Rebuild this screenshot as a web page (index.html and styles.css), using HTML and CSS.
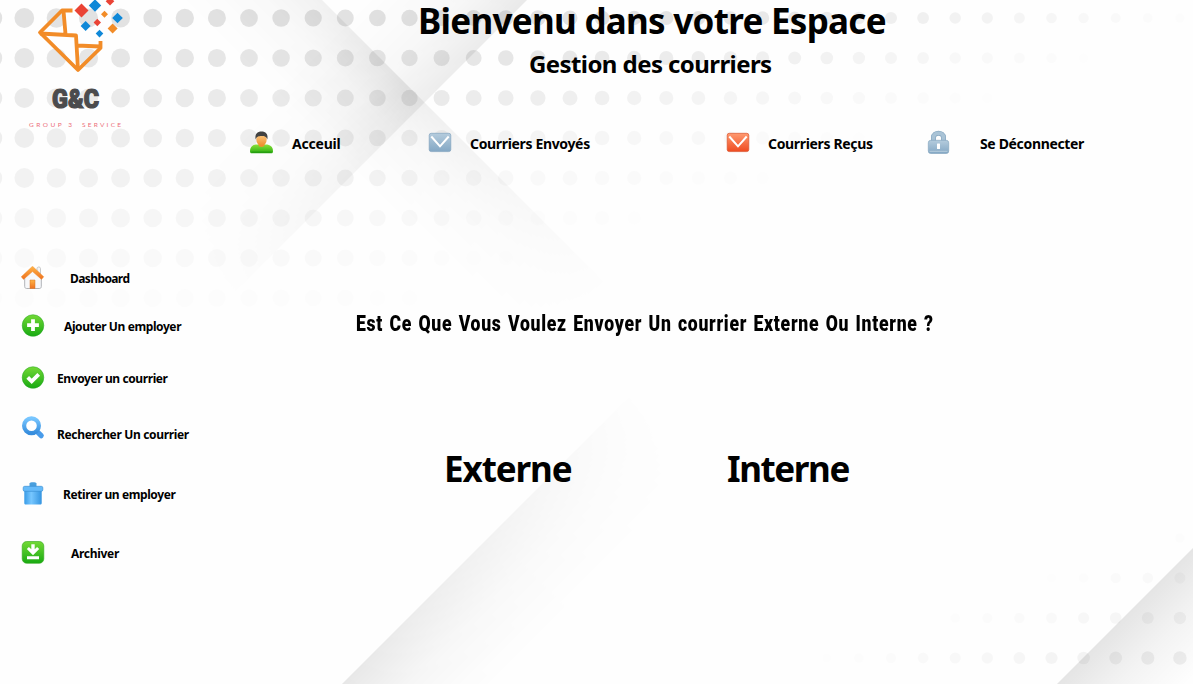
FILE: index.html
```html
<!DOCTYPE html>
<html lang="fr">
<head>
<meta charset="utf-8">
<title>Gestion des courriers</title>
<link rel="stylesheet" href="styles.css">
</head>
<body>
<svg class="backdrop" width="1193" height="684" viewBox="0 0 1193 684" aria-hidden="true">
  <defs>
    <linearGradient id="ga" gradientUnits="userSpaceOnUse" x1="424" y1="102" x2="354" y2="172"><stop offset="0" stop-opacity=".085"/><stop offset=".4" stop-opacity=".035"/><stop offset="1" stop-opacity="0"/></linearGradient>
    <linearGradient id="ma" gradientUnits="userSpaceOnUse" x1="320" y1="0" x2="610" y2="290"><stop offset="0" stop-color="#999"/><stop offset=".3" stop-color="#fff"/><stop offset=".37" stop-color="#aaa"/><stop offset=".65" stop-color="#555"/><stop offset="1" stop-color="#000"/></linearGradient>
    <mask id="ka" maskUnits="userSpaceOnUse" x="0" y="0" width="1193" height="684"><rect width="1193" height="684" fill="url(#ma)"/></mask>
    <linearGradient id="gb" gradientUnits="userSpaceOnUse" x1="424" y1="102" x2="344" y2="22"><stop offset="0" stop-opacity=".08"/><stop offset=".4" stop-opacity=".03"/><stop offset="1" stop-opacity="0"/></linearGradient>
    <linearGradient id="mb" gradientUnits="userSpaceOnUse" x1="527" y1="0" x2="230" y2="297"><stop offset="0" stop-color="#fff"/><stop offset=".35" stop-color="#ccc"/><stop offset="1" stop-color="#000"/></linearGradient>
    <mask id="kb" maskUnits="userSpaceOnUse" x="0" y="0" width="1193" height="684"><rect width="1193" height="684" fill="url(#mb)"/></mask>
    <linearGradient id="gc" gradientUnits="userSpaceOnUse" x1="342" y1="684" x2="417" y2="759"><stop offset="0" stop-opacity=".09"/><stop offset=".45" stop-opacity=".035"/><stop offset="1" stop-opacity="0"/></linearGradient>
    <linearGradient id="mc" gradientUnits="userSpaceOnUse" x1="342" y1="684" x2="635" y2="391"><stop offset="0" stop-color="#fff"/><stop offset=".35" stop-color="#aaa"/><stop offset="1" stop-color="#000"/></linearGradient>
    <mask id="kc" maskUnits="userSpaceOnUse" x="0" y="0" width="1193" height="684"><rect width="1193" height="684" fill="url(#mc)"/></mask>
    <linearGradient id="gd" gradientUnits="userSpaceOnUse" x1="1125" y1="616" x2="1190" y2="681"><stop offset="0" stop-opacity=".1"/><stop offset=".45" stop-opacity=".045"/><stop offset="1" stop-opacity="0"/></linearGradient>
  </defs>
  <path d="M0 0H322L722 400H0z" fill="url(#ga)" mask="url(#ka)"/>
  <path d="M0 0H527L127 400H0z" fill="url(#gb)" mask="url(#kb)"/>
  <path d="M342 684L742 284V684z" fill="url(#gc)" mask="url(#kc)"/>
  <path d="M1057 684L1193 548V684z" fill="url(#gd)"/>
  <g id="dots"></g>
</svg>

<div class="page">
  <header class="header">
    <svg class="logo" width="112" height="134" viewBox="18 0 112 134" role="img" aria-label="G&amp;C Group 3 Service">
      <g fill="none" stroke="#f28c28" stroke-width="3.800" stroke-linejoin="round">
        <path d="M72.500 10.500H62L40 32.500L78 70L100.500 48V41"/>
        <path d="M63.500 11L65.500 34M40 33.500L76 35.500L78 70M77 45.500L100 46.500"/>
      </g>
      <path d="M81.500 3.500l7 7-7 7-7-7z" fill="#ea4335"/>
      <path d="M95-.7l6.200 6.200-6.200 6.200-6.200-6.200z" fill="#0f88d8"/>
      <path d="M110-3l4.300 4.300-4.300 4.300-4.300-4.300z" fill="#ea4335"/>
      <path d="M117.500 12.700l5.300 5.300-5.300 5.300-5.300-5.300z" fill="#0f88d8"/>
      <path d="M104.500 10.800l3.500 3.500-3.500 3.500-3.500-3.500z" fill="#f28c28"/>
      <path d="M85.600 21l5 5-5 5-5-5z" fill="#0f88d8"/>
      <path d="M97.300 18.800l3.700 3.700-3.700 3.700-3.700-3.700z" fill="#ea4335"/>
      <path d="M112.600 23.500l5 5-5 5-5-5z" fill="#f28c28"/>
      <path d="M99.500 29.800l3.800 3.800-3.800 3.800-3.800-3.800z" fill="#0f88d8"/>
      <text class="logo-name" x="52" y="107.500" textLength="47" lengthAdjust="spacingAndGlyphs">G&amp;C</text>
      <text class="logo-tag" x="29" y="127" textLength="43">GROUP 3</text>
      <text class="logo-tag" x="82" y="127" textLength="39">SERVICE</text>
    </svg>
    <div class="titles">
      <h1 class="title">Bienvenu dans votre Espace</h1>
      <h2 class="subtitle">Gestion des courriers</h2>
    </div>
  </header>

  <nav class="nav">
    <a class="nav-item nav-home">
      <svg width="24" height="24" viewBox="0 0 24 24"><defs><linearGradient id="g1" x2="0" y2="1"><stop stop-color="#8be03a"/><stop offset="1" stop-color="#2bad12"/></linearGradient><linearGradient id="g2" x2="0" y2="1"><stop stop-color="#ffd08a"/><stop offset="1" stop-color="#ee8d2c"/></linearGradient></defs><path d="M1 21.500c0-5 3-7 7-7h9c4 0 7 2 7 7 0 1-.7 1.800-1.500 1.800H2.500c-.8 0-1.500-.8-1.500-1.800z" fill="url(#g1)"/><path d="M2.500 22.200h20" stroke="#239a10" stroke-width="1.200"/><path d="M9.500 12h6v3c0 2.500-6 2.500-6 0z" fill="#ec9230"/><ellipse cx="12.500" cy="9.500" rx="5.200" ry="6.200" fill="url(#g2)"/><path d="M6.700 9.500C5.500 4 8.500 1.500 12.500 1.500S19.500 4 18.300 9.500C17.500 6.500 15.500 6 12.500 6S7.500 6.500 6.700 9.500z" fill="#424242"/></svg>
      <span>Acceuil</span>
    </a>
    <a class="nav-item nav-sent">
      <svg width="24" height="24" viewBox="0 0 24 24"><defs><linearGradient id="g3" x2="0" y2="1"><stop stop-color="#b5ccdd"/><stop offset="1" stop-color="#83a7c4"/></linearGradient></defs><rect x="1.200" y="3.300" width="21.600" height="18.300" rx="2" fill="url(#g3)" stroke="#82a4be" stroke-width=".7"/><path d="M3.300 6.500l8.700 9.800 8.700-9.800" fill="none" stroke="#fff" stroke-width="2"/></svg>
      <span>Courriers Envoyés</span>
    </a>
    <a class="nav-item nav-received">
      <svg width="24" height="24" viewBox="0 0 24 24"><defs><linearGradient id="g4" x2="0" y2="1"><stop stop-color="#ff9a70"/><stop offset="1" stop-color="#ef4b20"/></linearGradient></defs><rect x="1.200" y="3.300" width="21.600" height="18.300" rx="2" fill="url(#g4)" stroke="#d9532d" stroke-width=".7"/><path d="M3.300 6.500l8.700 9.800 8.700-9.800" fill="none" stroke="#fff" stroke-width="2"/></svg>
      <span>Courriers Reçus</span>
    </a>
    <a class="nav-item nav-logout">
      <svg width="24" height="24" viewBox="0 0 24 24"><path d="M7.500 11V7.500C7.500 1.800 17.500 1.800 17.500 7.500V11" fill="none" stroke="#88a9c2" stroke-width="5"/><path d="M7.500 11V7.500C7.500 1.800 17.500 1.800 17.500 7.500V11" fill="none" stroke="#a9c3d6" stroke-width="3.600"/><rect x="2.300" y="10.300" width="20.400" height="13.200" rx="2.500" fill="url(#g3)" stroke="#86a7c0" stroke-width=".7"/><path d="M3.500 21.300h18" stroke="#c3d6e3" stroke-width=".8"/><rect x="11" y="13.500" width="3" height="5.500" rx=".5" fill="#fff"/></svg>
      <span>Se Déconnecter</span>
    </a>
  </nav>

  <div class="content">
    <aside class="sidebar">
      <a class="side-item item-dashboard">
        <svg width="24" height="24" viewBox="0 0 24 24"><defs><linearGradient id="g5" x2="0" y2="1"><stop stop-color="#ffb445"/><stop offset="1" stop-color="#ef7120"/></linearGradient></defs><path d="M16 2.500c0-2 3.500-2 3.500 0V8L16 5z" fill="#f4f4f4" stroke="#bbb" stroke-width=".8"/><path d="M3.700 11L12 3.500l8.300 7.500v9.500c0 1.300-.7 2-2 2H5.700c-1.300 0-2-.7-2-2z" fill="#f7f8fa" stroke="#a9abb0" stroke-width=".9"/><path d="M11.500 .2L.2 10.800l2.300 2.600 9-7.800 9 7.800 2.300-2.600z" fill="url(#g5)" stroke="#ed8a2e" stroke-width=".4"/><path d="M9 14h5v8.500H9z" fill="url(#g5)" stroke="#d77729" stroke-width=".5"/></svg>
        <span>Dashboard</span>
      </a>
      <a class="side-item item-add">
        <svg width="24" height="24" viewBox="0 0 24 24"><defs><linearGradient id="g6" x2="0" y2="1"><stop stop-color="#73d936"/><stop offset="1" stop-color="#18aa12"/></linearGradient></defs><circle cx="12" cy="11.500" r="10.800" fill="url(#g6)" stroke="#25a522" stroke-width=".5"/><path d="M12 5.300v11.800M6.100 11.200h11.800" stroke="#fff" stroke-width="3.800"/></svg>
        <span>Ajouter Un employer</span>
      </a>
      <a class="side-item item-send">
        <svg width="24" height="24" viewBox="0 0 24 24"><circle cx="12" cy="11.500" r="10.800" fill="url(#g6)" stroke="#25a522" stroke-width=".5"/><path d="M6.700 11.300l4 4 7-7" fill="none" stroke="#fff" stroke-width="3.800"/></svg>
        <span>Envoyer un courrier</span>
      </a>
      <a class="side-item item-search">
        <svg width="24" height="24" viewBox="0 0 24 24"><defs><linearGradient id="g7" x2="0" y2="1"><stop stop-color="#78c6ff"/><stop offset="1" stop-color="#368ddd"/></linearGradient></defs><path d="M16 15.500l4.200 4.200" stroke="#489bea" stroke-width="5.200" stroke-linecap="round"/><circle cx="10.500" cy="9.700" r="7.400" fill="#fff" stroke="url(#g7)" stroke-width="4.200"/></svg>
        <span>Rechercher Un courrier</span>
      </a>
      <a class="side-item item-remove">
        <svg width="24" height="24" viewBox="0 0 24 24"><defs><linearGradient id="g8"><stop stop-color="#389be7"/><stop offset=".4" stop-color="#77c7ff"/><stop offset="1" stop-color="#3494e0"/></linearGradient></defs><path d="M8.500 5V1.500c0-1.800 7-1.800 7 0V5z" fill="#4a9fdd"/><path d="M3.300 8h17.400v13c0 1-.7 1.500-1.500 1.500H4.800c-.8 0-1.500-.5-1.500-1.500z" fill="url(#g8)"/><rect x="2.200" y="4.300" width="19.600" height="5" rx="1.500" fill="#66bbfa" stroke="#3b91d4" stroke-width=".7"/></svg>
        <span>Retirer un employer</span>
      </a>
      <a class="side-item item-archive">
        <svg width="24" height="24" viewBox="0 0 24 24"><rect x="1.200" y=".5" width="21.600" height="21.800" rx="4.500" fill="url(#g6)" stroke="#30a61b" stroke-width=".6"/><path d="M10.300 3.200h3.400v5l2.400-2.300 2.100 2.100L12 14.200 5.800 8l2.100-2.100 2.400 2.300zM6 15.200h12v3H6z" fill="#fff"/></svg>
        <span>Archiver</span>
      </a>
    </aside>

    <main class="main">
      <p class="question"><span>Est Ce Que Vous Voulez Envoyer Un courrier Externe Ou Interne ?</span></p>
      <div class="choices">
        <a class="choice choice-ext">Externe</a>
        <a class="choice choice-int">Interne</a>
      </div>
    </main>
  </div>
</div>
<script src="dots.js"></script>
</body>
</html>
```

FILE: dots.js
```js
// Halftone dots fading from the top-left and bottom-right corners.
(function () {
  var group = document.getElementById('dots');
  function dot(x, y, r, a) {
    if (a < 0.003) return;
    var c = document.createElementNS('http://www.w3.org/2000/svg', 'circle');
    c.setAttribute('cx', x);
    c.setAttribute('cy', y);
    c.setAttribute('r', r);
    c.setAttribute('fill-opacity', a.toFixed(4));
    group.appendChild(c);
  }
  for (var row = 0; row < 17; row++) {
    for (var col = -1; col < 37; col++) {
      var x = 24.3 + col * 32.1, y = 18 + row * 40;
      if (row < 9) {
        var fade = Math.pow(Math.max(0, 1 - y / 350), 1.35);
        var side = Math.max(0, Math.min(1, (1260 - x - 2.5 * y * Math.min(1, x / 500)) / 600));
        dot(x, y, 10 - x * 0.0044, 0.12 * fade * side);
      } else if (row > 12) {
        var reach = (x - 805 - (658 - y) * 2.75) / 375;
        dot(x, y, 4.8 + Math.max(0, reach) * 2, 0.058 * Math.max(0, reach));
      }
    }
  }
})();
```

FILE: styles.css
```css
* { box-sizing: border-box; }
body {
  margin: 0;
  background: #fefefe;
  color: #000;
  font-family: "Noto Sans", "Open Sans", sans-serif;
  font-weight: 700;
}
.backdrop { position: absolute; left: 0; top: 0; z-index: -1; }
.page { width: 1193px; height: 684px; }
.header { display: flex; height: 130px; }
.logo { flex: none; margin-left: 18px; }
.logo-name { font: 900 26px Roboto, sans-serif; fill: #4b4b4d; stroke: #4b4b4d; stroke-width: 1.2px; }
.logo-tag { font: 400 6.5px Lato, sans-serif; fill: #ec6f7a; }
.titles { display: flex; flex-direction: column; }
.title { margin: 0 0 0 288px; font-size: 35px; line-height: 42px; letter-spacing: -.72px; white-space: nowrap; }
.subtitle { margin: 7px 0 0 399px; font-size: 24px; line-height: 30px; letter-spacing: -.58px; white-space: nowrap; }
.nav { display: flex; height: 26px; padding-left: 249px; font-size: 14px; }
.nav-item { display: flex; align-items: center; height: 24px; white-space: nowrap; }
.nav-item span { line-height: 20px; padding-top: 4px; letter-spacing: -.34px; }
.nav-home { width: 179px; gap: 19px; }
.nav-home span { letter-spacing: -.2px; }
.nav-sent { width: 298px; gap: 18px; }
.nav-received { width: 200px; gap: 18px; }
.nav-logout { gap: 30px; }
.content { display: flex; }
.sidebar { width: 300px; padding: 110px 0 0 21px; font-size: 12px; }
.side-item { display: flex; height: 24px; white-space: nowrap; letter-spacing: -.4px; }
.side-item span { line-height: 26px; }
.item-dashboard { gap: 25px; letter-spacing: -.6px; }
.item-add { gap: 19px; margin-top: 24px; }
.item-send { gap: 12px; margin-top: 28px; }
.item-search { gap: 12px; margin-top: 26px; letter-spacing: -.34px; }
.item-search span { padding-top: 6px; }
.item-remove { gap: 18px; margin-top: 42px; }
.item-archive { gap: 26px; margin-top: 35px; letter-spacing: -.3px; }
.main { flex: 1; padding-top: 153px; }
.question { margin: 0 0 0 56px; font: 900 22px/30px "Roboto", sans-serif; white-space: nowrap; }
.question span { display: inline-block; letter-spacing: .9px; word-spacing: 1.6px; transform: scaleX(.8); transform-origin: 0 50%; }
.choices { display: flex; margin-top: 108px; font-size: 35px; line-height: 44px; letter-spacing: -1.1px; }
.choice-ext { width: 283px; margin-left: 144px; }
.choice-int { letter-spacing: -1.4px; }
```
